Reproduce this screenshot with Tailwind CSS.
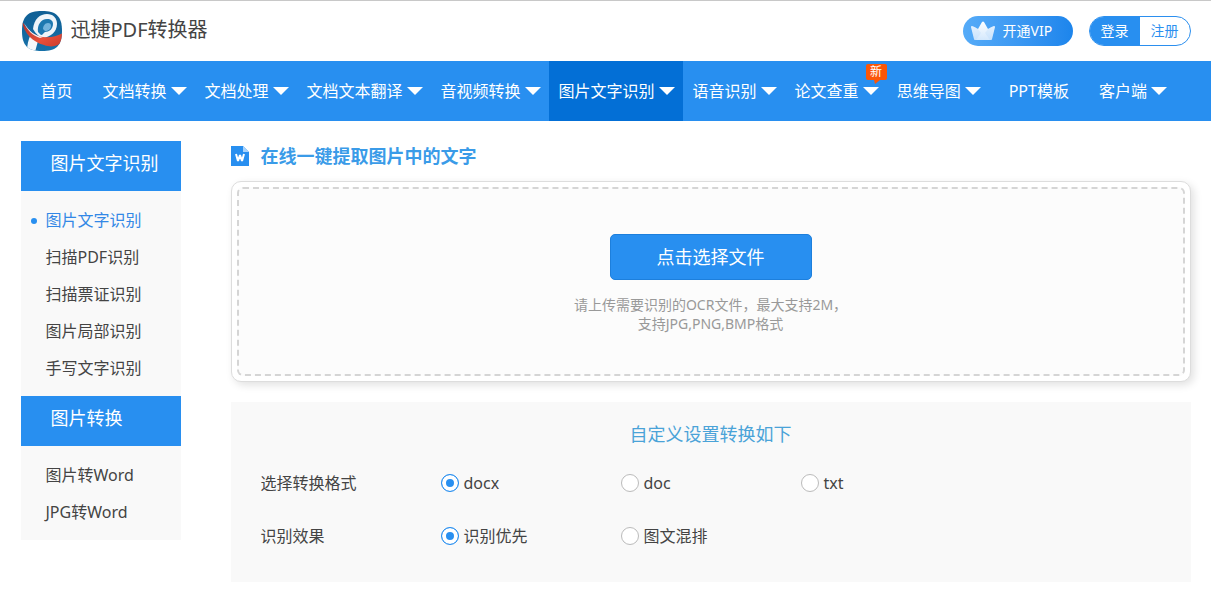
<!DOCTYPE html>
<html lang="zh-CN">
<head>
    <meta charset="UTF-8">
    <meta name="viewport" content="width=device-width, initial-scale=1.0">
    <title>图片文字识别 - 迅捷PDF转换器</title>
    <script src="https://cdn.jsdelivr.net/npm/@tailwindcss/browser@4"></script>
    <style>
        body {
            font-family: 'Noto Sans', 'Noto Sans CJK SC', sans-serif;
        }
    </style>
</head>
<body class="bg-white text-base text-[#444]">
    <!-- Header -->
    <header class="border-t border-[#c8c8c8]">
        <div class="mx-auto flex h-[60px] max-w-[1170px] items-center justify-between">
            <a href="#" class="flex items-center gap-2 pb-0.5 text-xl text-[#444]">
                <svg class="mt-0.5 size-[42px]" viewBox="0 0 42 42" aria-hidden="true">
                    <defs>
                        <linearGradient id="logoBlue" x1="0" y1="0" x2="0" y2="1">
                            <stop offset="0" stop-color="#0f5f94"/>
                            <stop offset="1" stop-color="#1671a9"/>
                        </linearGradient>
                        <linearGradient id="logoRed" x1="0" y1="0" x2="1" y2="1">
                            <stop offset="0" stop-color="#a82f2c"/>
                            <stop offset="0.6" stop-color="#e8503a"/>
                            <stop offset="1" stop-color="#c93a2c"/>
                        </linearGradient>
                        <clipPath id="logoClip">
                            <path d="M21 1C35 1 41 6 41 21S35 41 21 41 1 36 1 21 7 1 21 1Z"/>
                        </clipPath>
                    </defs>
                    <g clip-path="url(#logoClip)">
                        <path d="M0 0h42v42H0z" fill="url(#logoBlue)"/>
                        <path d="M12 19C13 9 19 4 26 4c6 0 10 4 10 10 0 8-7 13-14 14-4-1-7-4-10-9z" fill="#eef5fa"/>
                        <path d="M17 22c-1-7 3-13 9-13 4 0 6 2 6 5 0 5-4 8-8 8-2 1-2 3-4 3z" fill="#1d78b0"/>
                        <path d="M22 19c0-3 2-6 5-6 2 0 3 1 3 3 0 3-3 5-6 5z" fill="#73b3dc"/>
                        <path d="M10 24c2 3 5 5 7 7l-3 11H6c0-6 1-12 4-18z" fill="#f4f8fb"/>
                        <path d="M1 11c5 9 12 15 21 16 8 1 14-1 20-4v8c-4 5-11 7-19 4C12 32 3 24 1 11z" fill="url(#logoRed)"/>
                        <path d="M3 13c5 8 11 13 19 14l-3 1C12 26 6 20 3 13z" fill="#f4eded"/>
                    </g>
                </svg>
                迅捷PDF转换器
            </a>
            <div class="flex gap-4 text-sm">
                <a href="#" class="flex h-[30px] w-[110px] items-center gap-2 rounded-full bg-linear-to-r from-[#55abf8] to-[#1c85ec] pl-2 text-white">
                    <svg class="h-5 w-6" viewBox="0 0 24 20" aria-hidden="true">
                        <defs>
                            <linearGradient id="crown" x1="0" y1="0" x2="0" y2="1">
                                <stop offset="0" stop-color="#fff"/>
                                <stop offset="1" stop-color="#d3e8fd"/>
                            </linearGradient>
                        </defs>
                        <path d="M1 5q3 1 6 3l4-7q1-1 2 0l4 7q3-2 6-3 1 0 1 1l-3 12q0 1-1 1H4q-1 0-1-1L0 6q0-1 1-1Z" fill="url(#crown)"/>
                        <path d="M7 8l3 4-5 7H4q-1 0-1-1L0 6q0-1 1-1 3 1 6 3ZM17 8l-3 4 5 7h1q1 0 1-1l3-12q0-1-1-1-3 1-6 3Z" fill="#9fcdfa" opacity=".2"/>
                    </svg>
                    开通VIP
                </a>
                <div class="flex h-[30px] w-[102px] overflow-hidden rounded-full border border-[#2b8fef]">
                    <a href="#" class="flex w-[50px] items-center justify-center bg-[#288ff0] text-white">登录</a>
                    <a href="#" class="flex flex-1 items-center justify-center text-[#2b8fef]">注册</a>
                </div>
            </div>
        </div>
    </header>

    <!-- Main navigation -->
    <nav class="bg-[#288ff0] text-white">
        <div class="mx-auto flex h-[60px] max-w-[1170px] whitespace-nowrap">
            <a href="#" class="flex items-center px-5">首页</a>
            <a href="#" class="flex items-center gap-1 pr-2 pl-2.5">文档转换<svg class="h-2 w-4" viewBox="0 0 16 8" fill="currentColor"><path d="M0 0h16L8 8z"/></svg></a>
            <a href="#" class="flex items-center gap-1 pr-2 pl-2.5">文档处理<svg class="h-2 w-4" viewBox="0 0 16 8" fill="currentColor"><path d="M0 0h16L8 8z"/></svg></a>
            <a href="#" class="flex items-center gap-1 pr-2 pl-2.5">文档文本翻译<svg class="h-2 w-4" viewBox="0 0 16 8" fill="currentColor"><path d="M0 0h16L8 8z"/></svg></a>
            <a href="#" class="flex items-center gap-1 pr-2 pl-2.5">音视频转换<svg class="h-2 w-4" viewBox="0 0 16 8" fill="currentColor"><path d="M0 0h16L8 8z"/></svg></a>
            <a href="#" class="flex items-center gap-1 bg-[#036fd6] pr-2 pl-2.5">图片文字识别<svg class="h-2 w-4" viewBox="0 0 16 8" fill="currentColor"><path d="M0 0h16L8 8z"/></svg></a>
            <a href="#" class="flex items-center gap-1 pr-2 pl-2.5">语音识别<svg class="h-2 w-4" viewBox="0 0 16 8" fill="currentColor"><path d="M0 0h16L8 8z"/></svg></a>
            <a href="#" class="relative flex items-center gap-1 pr-2 pl-2.5">论文查重<svg class="h-2 w-4" viewBox="0 0 16 8" fill="currentColor"><path d="M0 0h16L8 8z"/></svg>
                <span class="absolute top-[3px] right-0 flex h-4 w-[21px] items-center justify-center rounded-xs bg-[#fb5607] text-xs">新
                    <svg class="absolute top-4 left-2 h-1 w-1.5" viewBox="0 0 6 4"><path d="M0 0h6L1 4z" fill="#fb5607"/></svg>
                </span>
            </a>
            <a href="#" class="flex items-center gap-1 pr-2 pl-2.5">思维导图<svg class="h-2 w-4" viewBox="0 0 16 8" fill="currentColor"><path d="M0 0h16L8 8z"/></svg></a>
            <a href="#" class="flex items-center px-5">PPT模板</a>
            <a href="#" class="flex items-center gap-1 pr-2 pl-2.5">客户端<svg class="h-2 w-4" viewBox="0 0 16 8" fill="currentColor"><path d="M0 0h16L8 8z"/></svg></a>
        </div>
    </nav>

    <div class="mx-auto flex max-w-[1170px] items-start gap-[50px] pt-5">
        <!-- Sidebar -->
        <aside class="w-40 shrink-0 bg-[#f9f9f9]">
            <h2 class="flex h-[50px] items-center bg-[#288ff0] pb-1.5 pl-[30px] text-lg text-white">图片文字识别</h2>
            <ul class="pt-[11px] pb-[9px] leading-[37px]">
                <li><a href="#" class="flex items-center gap-[9px] pl-2.5 text-[#3388e6]"><span class="size-1.5 rounded-full bg-[#288ff0]"></span>图片文字识别</a></li>
                <li><a href="#" class="block pl-[25px]">扫描PDF识别</a></li>
                <li><a href="#" class="block pl-[25px]">扫描票证识别</a></li>
                <li><a href="#" class="block pl-[25px]">图片局部识别</a></li>
                <li><a href="#" class="block pl-[25px]">手写文字识别</a></li>
            </ul>
            <h2 class="flex h-[50px] items-center bg-[#288ff0] pb-1.5 pl-[30px] text-lg text-white">图片转换</h2>
            <ul class="pt-[11px] pb-[9px] leading-[37px]">
                <li><a href="#" class="block pl-[25px]">图片转Word</a></li>
                <li><a href="#" class="block pl-[25px]">JPG转Word</a></li>
            </ul>
        </aside>

        <main class="min-w-0 flex-1">
            <h1 class="flex h-[30px] items-center gap-3 text-lg font-bold text-[#3a9be8]">
                <svg class="h-5 w-[18px]" viewBox="0 0 18 20" aria-hidden="true">
                    <path d="M0 0h12l6 6v14H0z" fill="#288ff0"/>
                    <path d="M12 0l6 6h-6z" fill="#a9d3fa"/>
                    <path d="M5 8l2 7 2-6 2 6 2-7" fill="none" stroke="#fff" stroke-width="2" stroke-linejoin="bevel"/>
                </svg>
                在线一键提取图片中的文字
            </h1>

            <!-- Upload area -->
            <section class="mt-2.5 rounded-[10px] border border-[#ddd] bg-white p-[5px] shadow-[3px_3px_8px_#0000001f]">
                <div class="flex h-[189px] flex-col items-center rounded-md border-2 border-dashed border-[#d5d5d5] bg-[#fcfcfc] pt-[45px]">
                    <button type="button" class="h-[46px] w-[202px] rounded-[5px] border border-[#1d7fdc] bg-[#288ff0] text-lg text-white">点击选择文件</button>
                    <p class="mt-[15px] text-center text-sm leading-[19px] text-[#999]">请上传需要识别的OCR文件，最大支持2M，<br>支持JPG,PNG,BMP格式</p>
                </div>
            </section>

            <!-- Conversion settings -->
            <form class="mt-5 bg-[#f9f9f9] px-[30px] pt-[18px] pb-5">
                <h2 class="text-center text-lg text-[#4aa3d8]">自定义设置转换如下</h2>
                <div role="radiogroup" aria-labelledby="formatLabel" class="mt-2 flex h-[53px] items-center">
                    <span id="formatLabel" class="w-[180px]">选择转换格式</span>
                    <label class="flex w-[180px] items-center gap-[5px]">
                        <input type="radio" name="format" value="docx" checked class="size-[18px] appearance-none rounded-full border border-[#bbb] bg-white checked:border-[#288ff0] checked:bg-[#288ff0] checked:shadow-[inset_0_0_0_4px_#fff]">docx
                    </label>
                    <label class="flex w-[180px] items-center gap-[5px]">
                        <input type="radio" name="format" value="doc" class="size-[18px] appearance-none rounded-full border border-[#bbb] bg-white checked:border-[#288ff0] checked:bg-[#288ff0] checked:shadow-[inset_0_0_0_4px_#fff]">doc
                    </label>
                    <label class="flex w-[180px] items-center gap-[5px]">
                        <input type="radio" name="format" value="txt" class="size-[18px] appearance-none rounded-full border border-[#bbb] bg-white checked:border-[#288ff0] checked:bg-[#288ff0] checked:shadow-[inset_0_0_0_4px_#fff]">txt
                    </label>
                </div>
                <div role="radiogroup" aria-labelledby="effectLabel" class="flex h-[53px] items-center">
                    <span id="effectLabel" class="w-[180px]">识别效果</span>
                    <label class="flex w-[180px] items-center gap-[5px]">
                        <input type="radio" name="effect" value="ocr" checked class="size-[18px] appearance-none rounded-full border border-[#bbb] bg-white checked:border-[#288ff0] checked:bg-[#288ff0] checked:shadow-[inset_0_0_0_4px_#fff]">识别优先
                    </label>
                    <label class="flex w-[180px] items-center gap-[5px]">
                        <input type="radio" name="effect" value="mixed" class="size-[18px] appearance-none rounded-full border border-[#bbb] bg-white checked:border-[#288ff0] checked:bg-[#288ff0] checked:shadow-[inset_0_0_0_4px_#fff]">图文混排
                    </label>
                </div>
            </form>
        </main>
    </div>
</body>
</html>
